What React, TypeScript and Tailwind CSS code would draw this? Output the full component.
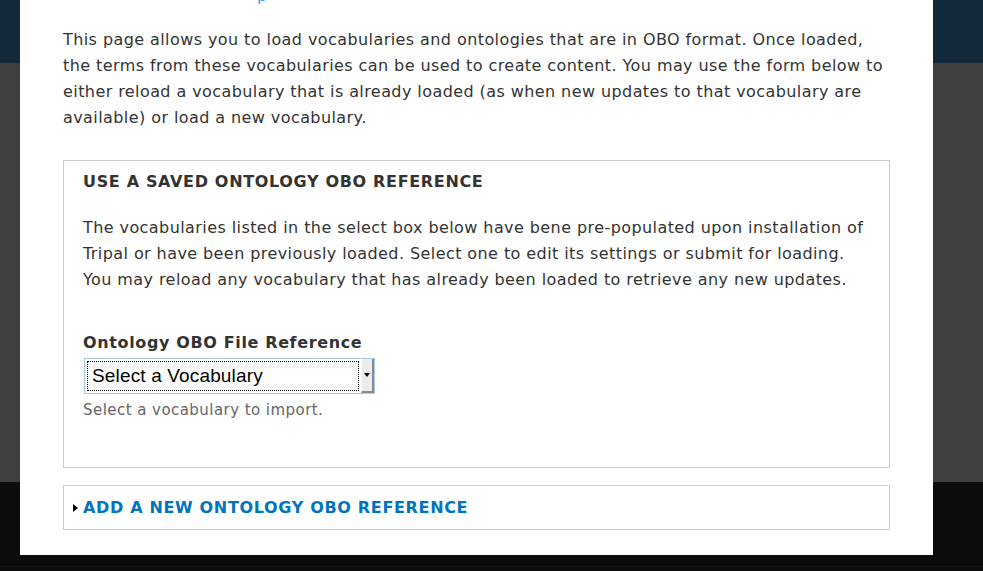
import React from "react";

export default function App() {
  return (
    <div className="relative w-[983px] h-[571px] overflow-hidden" style={{ fontFamily: '"DejaVu Sans", sans-serif' }}>
      <div className="flex flex-col h-full">
        <div className="h-[63px] bg-[#11293b]" />
        <div className="h-[419px] bg-[#404040]" />
        <div className="flex-1 bg-[#0c0c0c] flex flex-col">
          <div className="h-[84px]" />
          <div className="h-[1px] bg-[#161616]" />
        </div>
      </div>

      <div className="absolute left-[20px] top-0 w-[913px] h-[555px] bg-white pl-[43px] pr-[43px] pt-[27px] text-[#333]">
        <span className="absolute left-[237px] top-[-17px] text-[16px] leading-[26px] text-[#3a9ee0]">p</span>
        <p className="text-[16px] leading-[26px] tracking-[0.42px]">
          This page allows you to load vocabularies and ontologies that are in OBO format. Once loaded, the terms from these vocabularies can be used to create content. You may use the form below to either reload a vocabulary that is already loaded (as when new updates to that vocabulary are available) or load a new vocabulary.
        </p>

        <div className="mt-[29px] border border-[#cccccc] pt-[8px] pb-[47px] px-[19px]">
          <div className="text-[16px] leading-[26px] font-bold uppercase tracking-[0.66px]">Use a saved ontology OBO reference</div>
          <p className="mt-[20px] text-[16px] leading-[26px] tracking-[0.42px]">
            The vocabularies listed in the select box below have bene pre-populated upon installation of Tripal or have been previously loaded. Select one to edit its settings or submit for loading. You may reload any vocabulary that has already been loaded to retrieve any new updates.
          </p>
          <div className="mt-[37px] text-[16px] leading-[26px] font-bold tracking-[0.63px]">Ontology OBO File Reference</div>
          <div className="mt-[2px] ml-[1px] flex w-[291px] h-[36px] border border-[#a9c9ea] bg-white">
            <div className="flex-1 m-[2px] border border-dotted border-black flex items-center pl-[4px]">
              <span className="text-[19px] text-black tracking-[0.15px]" style={{ fontFamily: '"Liberation Sans", Arial, sans-serif' }}>
                Select a Vocabulary
              </span>
            </div>
            <div className="w-[13px] bg-[#ececec] border-l border-[#f8f8f8] border-r-2 border-b-2 border-r-[#8a8a8a] border-b-[#8a8a8a] flex items-center justify-center">
              <div className="w-0 h-0 border-l-[3px] border-r-[3px] border-t-[4px] border-l-transparent border-r-transparent border-t-black" />
            </div>
          </div>
          <div className="mt-[6px] text-[15px] leading-[20px] text-[#666] tracking-[0.45px]">Select a vocabulary to import.</div>
        </div>

        <div className="mt-[17px] border border-[#cccccc] h-[45px] flex items-center pl-[9px]">
          <div className="w-0 h-0 border-t-[4px] border-b-[4px] border-l-[5px] border-t-transparent border-b-transparent border-l-black" />
          <span className="ml-[5px] text-[16px] font-bold uppercase text-[#0074bd] tracking-[0.66px]">Add a new ontology OBO reference</span>
        </div>
      </div>
    </div>
  );
}
